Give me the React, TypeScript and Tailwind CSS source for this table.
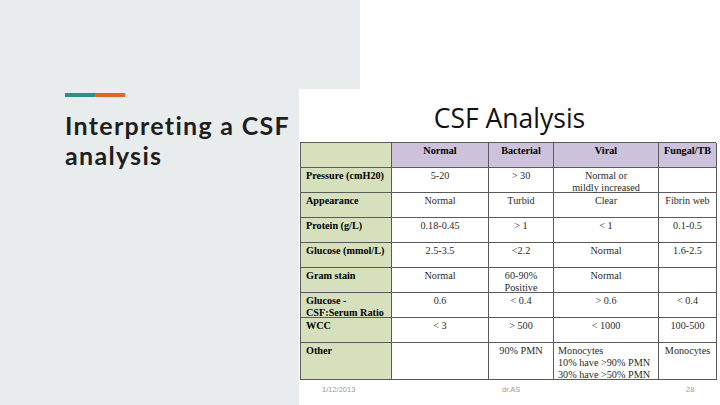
import React from "react";

const serif = { fontFamily: '"Liberation Serif", "Times New Roman", serif' };

type Cell = { t: React.ReactNode; align?: "c" | "l" };

const rows: { label: React.ReactNode; cells: Cell[] }[] = [
  { label: "Pressure (cmH20)", cells: [{ t: "5-20" }, { t: "> 30" }, { t: <>Normal or<br />mildly increased</> }, { t: "" }] },
  { label: "Appearance", cells: [{ t: "Normal" }, { t: "Turbid" }, { t: "Clear" }, { t: "Fibrin web" }] },
  { label: "Protein (g/L)", cells: [{ t: "0.18-0.45" }, { t: "> 1" }, { t: "< 1" }, { t: "0.1-0.5" }] },
  { label: "Glucose (mmol/L)", cells: [{ t: "2.5-3.5" }, { t: "<2.2" }, { t: "Normal" }, { t: "1.6-2.5" }] },
  { label: "Gram stain", cells: [{ t: "Normal" }, { t: <>60-90%<br />Positive</> }, { t: "Normal" }, { t: "" }] },
  { label: <>Glucose -<br />CSF:Serum Ratio</>, cells: [{ t: "0.6" }, { t: "< 0.4" }, { t: "> 0.6" }, { t: "< 0.4" }] },
  { label: "WCC", cells: [{ t: "< 3" }, { t: "> 500" }, { t: "< 1000" }, { t: "100-500" }] },
  {
    label: "Other",
    cells: [
      { t: "" },
      { t: "90% PMN" },
      { t: <>Monocytes<br />10% have &gt;90% PMN<br />30% have &gt;50% PMN</>, align: "l" },
      { t: "Monocytes" },
    ],
  },
];

const heads = ["Normal", "Bacterial", "Viral", "Fungal/TB"];

export default function App() {
  return (
    <div className="w-[720px] h-[405px] bg-[#e9eced] flex overflow-hidden">
      {/* left */}
      <div className="w-[299px] shrink-0 pl-[65px] pt-[93px]">
        <div className="flex h-[4px] w-[60px]">
          <div className="w-[30px] bg-[#27928a]" />
          <div className="w-[30px] bg-[#e2661d]" />
        </div>
        <div
          className="mt-[13px] text-[25px] leading-[30px] font-bold text-[#1e1e1e] tracking-[1.3px]"
          style={{ fontFamily: 'Lato, "Open Sans", sans-serif' }}
        >
          Interpreting a CSF
          <br />
          analysis
        </div>
      </div>
      {/* right */}
      <div className="flex-1 flex flex-col">
        <div className="h-[90px] flex">
          <div className="w-[61px] bg-[#e9eced]" />
          <div className="flex-1 bg-white" />
        </div>
        <div className="flex-1 bg-white flex flex-col pt-[16px]">
          <div
            className="h-[26px] leading-[26px] text-[26.5px] text-center text-[#111]"
            style={{ fontFamily: '"Open Sans", sans-serif' }}
          >
            CSF Analysis
          </div>
          <div
            className="mt-[11px] ml-[1px] w-[416px] grid grid-cols-[91px_97px_65px_105px_58px] grid-rows-[25px_25px_25px_25px_25px_25px_25px_25px_37px] border-t border-l border-[#5a5a5a] text-[10.2px] leading-[11.5px] text-[#2a2a2a]"
            style={serif}
          >
            <div className="bg-[#d6e0bd] border-r border-b border-[#5a5a5a]" />
            {heads.map((h) => (
              <div key={h} className="bg-[#cdc2dc] border-r border-b border-[#5a5a5a] text-center font-bold text-black pt-[2px]">
                {h}
              </div>
            ))}
            {rows.map((r, i) => (
              <React.Fragment key={i}>
                <div className="bg-[#d6e0bd] border-r border-b border-[#5a5a5a] font-bold text-black pl-[5px] pt-[2px]">
                  {r.label}
                </div>
                {r.cells.map((c, j) => (
                  <div
                    key={j}
                    className={
                      c.align === "l"
                        ? "border-r border-b border-[#5a5a5a] text-left pl-[4px] pt-[2px] leading-[12px]"
                        : "border-r border-b border-[#5a5a5a] text-center pt-[2px]"
                    }
                  >
                    {c.t}
                  </div>
                ))}
              </React.Fragment>
            ))}
          </div>
          <div
            className="flex items-start h-[25px] pt-[6px] text-[7.5px] leading-[8px] text-[#9a9a9a]"
            style={{ fontFamily: '"Liberation Sans", Arial, sans-serif' }}
          >
            <div className="w-[23px]" />
            <div className="w-[180px]">1/12/2013</div>
            <div className="w-[184px]">dr.AS</div>
            <div>28</div>
          </div>
        </div>
      </div>
    </div>
  );
}
